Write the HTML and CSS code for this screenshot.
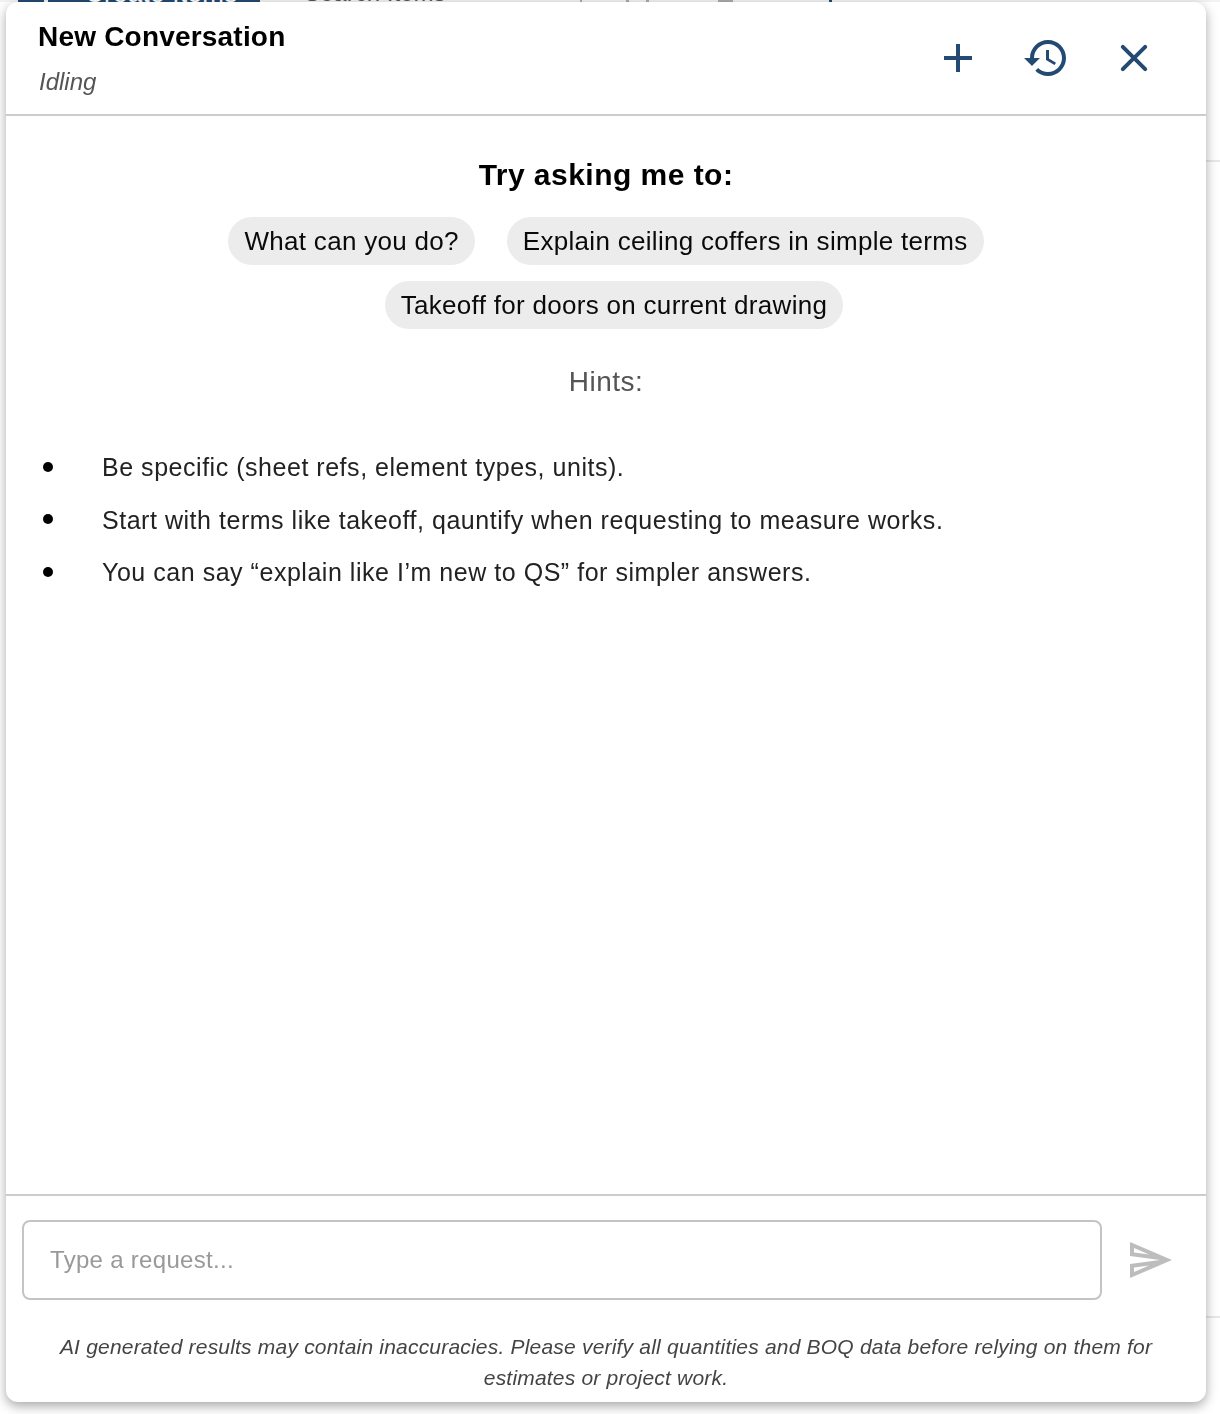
FILE: index.html
```html
<!DOCTYPE html>
<html lang="en">
<head>
    <meta charset="UTF-8">
    <meta name="viewport" content="width=device-width, initial-scale=1.0">
    <title>New Conversation</title>
    <link rel="stylesheet" href="styles.css">
</head>
<body>
    <div class="page">
        <div class="page-top">
            <span class="page-logo"></span>
            <span class="page-btn">Create Items</span>
            <span class="page-search">Search Items</span>
            <span class="page-mark mark-a"></span>
            <span class="page-mark mark-b"></span>
            <span class="page-mark mark-c"></span>
            <span class="page-mark mark-d"></span>
            <span class="page-mark mark-e"></span>
        </div>
        <div class="page-row page-row-first"></div>
        <div class="page-row page-row-second"></div>
    </div>

    <div class="chat">
        <header class="chat-head">
            <div class="chat-title">
                <h1>New Conversation</h1>
                <p>Idling</p>
            </div>
            <div class="chat-actions">
                <button class="icon-btn" aria-label="New">
                    <svg viewBox="0 0 24 24"><path d="M19 13h-6v6h-2v-6H5v-2h6V5h2v6h6v2z"/></svg>
                </button>
                <button class="icon-btn" aria-label="History">
                    <svg viewBox="0 0 24 24"><path d="M13 3c-4.97 0-9 4.03-9 9H1l3.89 3.89.07.14L9 12H6c0-3.87 3.13-7 7-7s7 3.13 7 7-3.13 7-7 7c-1.93 0-3.68-.79-4.94-2.06l-1.42 1.42C8.27 19.99 10.51 21 13 21c4.97 0 9-4.03 9-9s-4.03-9-9-9zm-1 5v5l4.28 2.54.72-1.21-3.5-2.08V8H12z"/></svg>
                </button>
                <button class="icon-btn" aria-label="Close">
                    <svg viewBox="0 0 24 24"><path d="M18.3 5.71a.996.996 0 0 0-1.41 0L12 10.59 7.11 5.7A.996.996 0 1 0 5.7 7.11L10.59 12 5.7 16.89a.996.996 0 1 0 1.41 1.41L12 13.41l4.89 4.89a.996.996 0 1 0 1.41-1.41L13.41 12l4.89-4.89c.38-.38.38-1.02 0-1.4z"/></svg>
                </button>
            </div>
        </header>

        <main class="chat-body">
            <h2>Try asking me to:</h2>
            <div class="chips">
                <span class="chip">What can you do?</span>
                <span class="chip">Explain ceiling coffers in simple terms</span>
                <span class="chip">Takeoff for doors on current drawing</span>
            </div>
            <h3>Hints:</h3>
            <ul class="hints">
                <li>Be specific (sheet refs, element types, units).</li>
                <li>Start with terms like takeoff, qauntify when requesting to measure works.</li>
                <li>You can say “explain like I’m new to QS” for simpler answers.</li>
            </ul>
        </main>

        <footer class="chat-foot">
            <div class="chat-input">
                <input type="text" placeholder="Type a request...">
                <button class="send-btn" aria-label="Send">
                    <svg viewBox="0 0 24 24"><path d="M4.01 6.03l7.51 3.22-7.52-1 .01-2.22m7.5 8.72L4 17.97v-2.22l7.51-1M2.01 3L2 10l15 2-15 2 .01 7L23 12 2.01 3z"/></svg>
                </button>
            </div>
            <p class="disclaimer">AI generated results may contain inaccuracies. Please verify all quantities and BOQ data before relying on them for estimates or project work.</p>
        </footer>
    </div>
</body>
</html>
```

FILE: styles.css
```css
*{
    box-sizing: border-box;
}
html, body{
    height: 100%;
}
body{
    margin: 0;
    background-color: #fff;
    font-family: "Liberation Sans", Arial, sans-serif;
    overflow: hidden;
}

/* page behind the chat panel, only its edges show */
.page-top{
    height: 2px;
    display: flex;
    overflow: hidden;
    background-color: #f2f2f2;
    padding-left: 18px;
}
.page-logo{
    width: 26px;
    height: 30px;
    margin-top: -26px;
    background-color: #234a73;
}
.page-btn{
    width: 212px;
    height: 30px;
    margin-top: -26px;
    margin-left: 4px;
    padding-left: 37px;
    background-color: #234a73;
    font-size: 26px;
    line-height: 38px;
    letter-spacing: 0.3px;
    color: #fff;
    white-space: nowrap;
}
.page-search{
    width: 143px;
    flex-shrink: 0;
    margin-top: -21px;
    margin-left: 44px;
    font-size: 24px;
    color: #555;
    white-space: nowrap;
}
.page-mark{
    height: 2px;
    width: 3px;
    flex-shrink: 0;
    background-color: #aaa;
}
.mark-a{
    width: 2px;
    margin-left: 133px;
}
.mark-b{
    margin-left: 44px;
}
.mark-c{
    margin-left: 17px;
}
.mark-d{
    width: 15px;
    margin-left: 69px;
}
.mark-e{
    margin-left: 96px;
    background-color: #234a73;
}
.page-row{
    margin-left: 1000px;
    border-bottom: 2px solid #e8e8e8;
}
.page-row-first{
    height: 160px;
}
.page-row-second{
    height: 1156px;
}

/* chat panel */
.chat{
    position: fixed;
    top: 2px;
    left: 6px;
    width: 1200px;
    height: 1400px;
    background-color: #fff;
    border-radius: 12px;
    box-shadow: 0 4px 12px rgba(0, 0, 0, 0.35);
    display: flex;
    flex-direction: column;
}
.chat-head{
    height: 114px;
    flex-shrink: 0;
    display: flex;
    justify-content: space-between;
    align-items: center;
    padding: 0 48px 0 32px;
    border-bottom: 2px solid #ccc;
}
.chat-title h1{
    margin: 0;
    font-size: 28px;
    line-height: 36px;
    font-weight: 700;
    letter-spacing: 0.2px;
    color: #000;
}
.chat-title p{
    margin: 11px 0 0 1px;
    font-size: 24px;
    line-height: 32px;
    font-style: italic;
    color: #555;
}
.chat-actions{
    display: flex;
    gap: 40px;
}
.icon-btn, .send-btn{
    width: 48px;
    height: 48px;
    padding: 0;
    border: none;
    background: none;
    flex-shrink: 0;
}
.icon-btn svg{
    display: block;
    width: 48px;
    height: 48px;
    fill: #234a73;
}
.send-btn svg{
    display: block;
    width: 48px;
    height: 48px;
    fill: #bdbdbd;
}

.chat-body{
    flex: 1;
    display: flex;
    flex-direction: column;
    padding-top: 39px;
}
.chat-body h2{
    margin: 0;
    text-align: center;
    font-size: 30px;
    line-height: 40px;
    font-weight: 700;
    letter-spacing: 0.47px;
    color: #000;
}
.chips{
    display: flex;
    flex-wrap: wrap;
    justify-content: center;
    gap: 16px;
    margin-top: 22px;
}
.chip{
    height: 48px;
    line-height: 48px;
    padding: 0 16px;
    border-radius: 24px;
    background-color: #ececec;
    font-size: 26px;
    letter-spacing: 0.3px;
    color: #0a0a0a;
    white-space: nowrap;
}
.chip + .chip{
    margin-left: 16px;
}
.chat-body h3{
    margin: 33px 0 0;
    text-align: center;
    font-size: 28px;
    line-height: 40px;
    font-weight: 400;
    letter-spacing: 0.5px;
    color: #555;
}
.hints{
    margin: 45px 0 0;
    padding: 0 0 0 37px;
    list-style: none;
    font-size: 25px;
    line-height: 40px;
    letter-spacing: 0.53px;
    color: #222;
}
.hints li{
    display: flex;
    align-items: center;
    gap: 49px;
    margin-bottom: 12.5px;
}
.hints li::before{
    content: "";
    width: 10px;
    height: 10px;
    margin-top: -1px;
    border-radius: 50%;
    background-color: #000;
    flex-shrink: 0;
}

.chat-foot{
    flex-shrink: 0;
    border-top: 2px solid #ccc;
    padding: 24px 32px 9px 16px;
}
.chat-input{
    display: flex;
    align-items: center;
    gap: 24px;
}
.chat-input input{
    flex: 1;
    min-width: 0;
    height: 80px;
    padding: 0 26px;
    border: 2px solid #c4c4c4;
    border-radius: 8px;
    background: #fff;
    font-family: inherit;
    font-size: 24px;
    letter-spacing: 0.3px;
    color: #222;
    outline: none;
}
.chat-input input::placeholder{
    color: #999;
    opacity: 1;
}
.disclaimer{
    margin: 31px 0 0 16px;
    text-align: center;
    font-size: 21px;
    line-height: 31px;
    letter-spacing: 0.2px;
    font-style: italic;
    color: #444;
}
```
